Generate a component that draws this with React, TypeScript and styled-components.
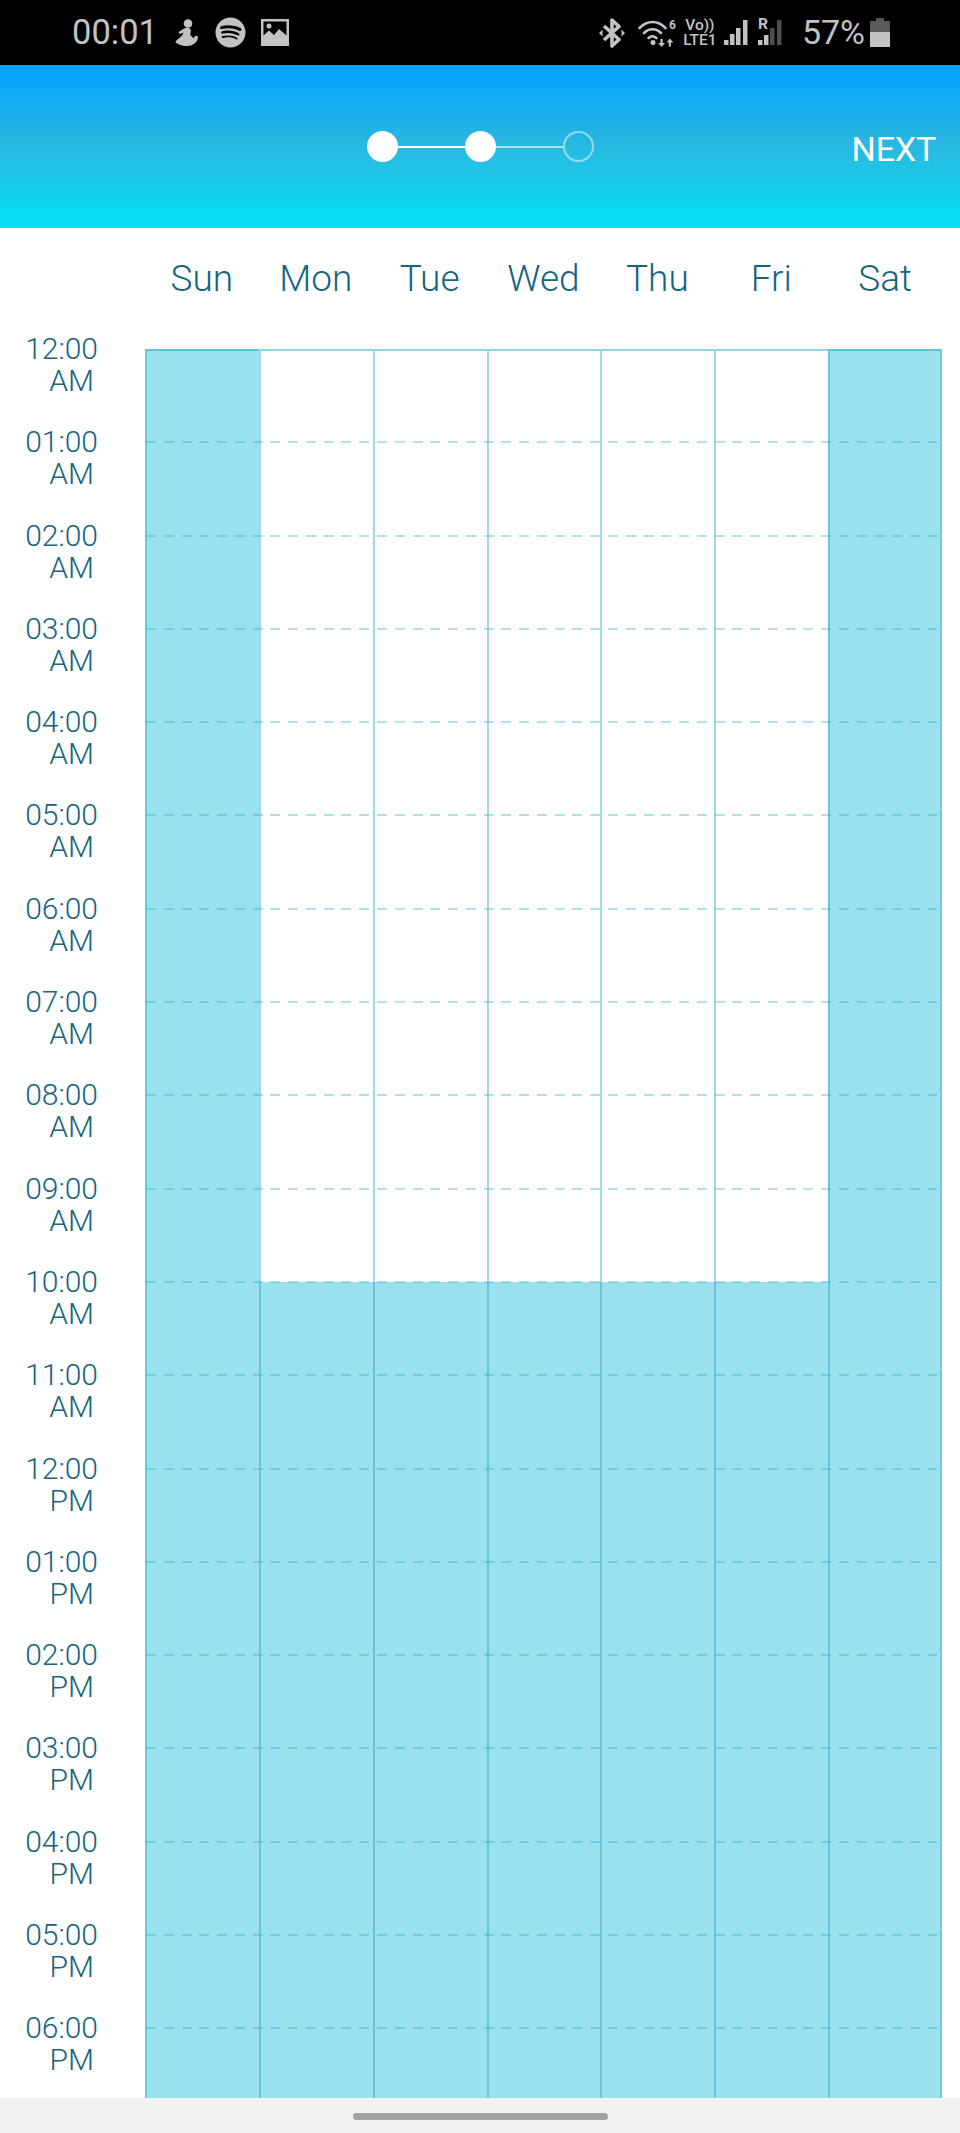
import React from "react";
import styled, { createGlobalStyle } from "styled-components";
import { FaSpotify } from "react-icons/fa";

const Global = createGlobalStyle`
  html, body { margin: 0; padding: 0; background: #fff; }
  body { font-family: Roboto, "Liberation Sans", sans-serif; }
  * { box-sizing: border-box; }
`;

const Screen = styled.div`
  width: 960px;
  height: 2133px;
  display: flex;
  flex-direction: column;
  overflow: hidden;
  background: #fff;
`;

const StatusBar = styled.div`
  height: 65px;
  flex: none;
  background: #000;
  color: #c2c2c2;
  display: flex;
  align-items: center;
  justify-content: space-between;
  padding: 0 70px 0 72px;
`;

const StatusGroup = styled.div`
  display: flex;
  align-items: center;
`;

const Clock = styled.span`
  font-size: 34.5px;
  font-weight: 400;
  line-height: 65px;
  width: 102px;
`;

const StatusIcon = styled.svg<{ $gap?: number }>`
  display: block;
  flex: none;
  margin-right: ${(p) => p.$gap ?? 0}px;
  fill: currentColor;
`;

const SpotifyWrap = styled.span`
  display: flex;
  font-size: 31px;
  margin-right: 15px;
`;

const WifiWrap = styled.span`
  position: relative;
  display: block;
  width: 38px;
  height: 28px;
  margin-right: 7px;
`;

const WifiBand = styled.span`
  position: absolute;
  right: 0;
  top: 0;
  font-size: 12px;
  font-weight: 700;
  line-height: 12px;
`;

const NetworkBadge = styled.span`
  width: 34px;
  margin: 0 7px 0 0;
  display: flex;
  flex-direction: column;
  align-items: center;
  font-size: 15.5px;
  font-weight: 500;
  line-height: 15px;
`;

const RoamWrap = styled.span`
  position: relative;
  display: block;
  width: 25px;
  height: 27px;
`;

const RoamMark = styled.span`
  position: absolute;
  left: 0;
  top: -2px;
  font-size: 15.5px;
  font-weight: 700;
  line-height: 15px;
`;

const Percent = styled.span`
  font-size: 34px;
  font-weight: 400;
  margin: 0 5px 0 19px;
  line-height: 65px;
`;

const Header = styled.header`
  height: 163px;
  flex: none;
  background: linear-gradient(180deg, #02a2fd 0%, #2ab8e0 50%, #03e2f6 100%);
  display: grid;
  grid-template-columns: 1fr auto 1fr;
  align-items: center;
  padding: 0 24px;
`;

const Stepper = styled.div`
  grid-column: 2;
  display: flex;
  align-items: center;
`;

const StepDot = styled.span<{ $done: boolean }>`
  width: 31px;
  height: 31px;
  border-radius: 50%;
  background: ${(p) => (p.$done ? "#fff" : "transparent")};
  border: 2px solid ${(p) => (p.$done ? "#fff" : "rgba(255,255,255,.5)")};
`;

const StepLine = styled.span<{ $done: boolean }>`
  width: 67px;
  height: 2px;
  background: ${(p) => (p.$done ? "#fff" : "rgba(255,255,255,.6)")};
`;

const NextButton = styled.span`
  grid-column: 3;
  justify-self: end;
  color: #fff;
  font-size: 34px;
  font-weight: 400;
  letter-spacing: -0.2px;
  padding-top: 4px;
`;

const DayRow = styled.div`
  height: 104px;
  flex: none;
  padding: 0 18px 0 145px;
  display: grid;
  grid-template-columns: repeat(7, 1fr);
  align-items: start;
`;

const DayName = styled.span`
  text-align: center;
  color: #16647f;
  font-size: 37px;
  font-weight: 300;
  line-height: 43px;
  padding-top: 29px;
`;

const Body = styled.div`
  flex: 1;
  min-height: 0;
  display: flex;
  overflow: hidden;
`;

const TimeColumn = styled.div`
  width: 145px;
  flex: none;
  padding-top: 1px;
`;

const TimeLabel = styled.div`
  height: 93.3px;
  padding-right: 47px;
  text-align: right;
  color: #16647f;
  font-size: 30px;
  font-weight: 300;
  line-height: 32px;
`;

const Meridiem = styled.span`
  display: block;
  padding-right: 4px;
`;

const GridColumn = styled.div`
  width: 797px;
  flex: none;
  padding-top: 17px;
`;

const HourRow = styled.div`
  position: relative;
  height: 93.3px;
  display: grid;
  grid-template-columns: repeat(7, 1fr);
  &:first-child > span { border-top: 2px solid rgba(40, 170, 200, 0.5); }
  &:not(:first-child)::after {
    content: "";
    position: absolute;
    left: 1px;
    right: 5px;
    top: -1px;
    height: 2px;
    background: repeating-linear-gradient(90deg, rgba(40,170,200,.36) 0, rgba(40,170,200,.36) 10px, transparent 10px, transparent 17.77px);
  }
`;

const HourCell = styled.span<{ $on: boolean }>`
  background: ${(p) => (p.$on ? "#9ae1ee" : "#fff")};
  border-left: 2px solid rgba(30, 160, 195, 0.42);
  &:first-child { border-left-color: rgba(40, 170, 200, 0.4); }
  &:last-child { border-right: 2px solid rgba(40, 170, 200, 0.4); }
`;

const BottomBar = styled.div`
  height: 35px;
  flex: none;
  background: #f2f2f2;
  display: flex;
  align-items: center;
  justify-content: center;
  padding-top: 1px;
`;

const HomePill = styled.span`
  width: 255px;
  height: 7px;
  border-radius: 4px;
  background: #a3a3a3;
`;

const DAYS = ["Sun", "Mon", "Tue", "Wed", "Thu", "Fri", "Sat"];
const HOURS = ["12:00", "01:00", "02:00", "03:00", "04:00", "05:00", "06:00", "07:00", "08:00", "09:00", "10:00", "11:00", "12:00", "01:00", "02:00", "03:00", "04:00", "05:00", "06:00"];

const isOn = (day: number, hour: number) => day === 0 || day === 6 || hour >= 10;

const PersonIcon = () => (
  <StatusIcon $gap={16} width="25" height="28" viewBox="0 0 25 28">
    <circle cx="14" cy="4.5" r="4.3" />
    <path d="M10 9.5c2.300-1 5.500-1 6.500.8.800 1.700.2 3.200-.3 4.700.7 2 2 3.500 3.600 4l1.500-2.300 2.500.5c.5 2.800-1 5.500-3 7-1.800 1.400-4.300 2.800-7.800 2.800-3.500 0-8-.8-11-3.300l-.5-1.500 6.500-5.500 1.600-3.200-3.600 1.500-1.700-1.800z" />
  </StatusIcon>
);

const GalleryIcon = () => (
  <StatusIcon width="28" height="27" viewBox="0 0 28 27">
    <path fillRule="evenodd" d="M0 0h28v27H0zM2.5 2.500v14l5.500-5 5 4.500 5-6 7.500 6.500V2.500z" />
    <circle cx="8" cy="7" r="2.5" />
  </StatusIcon>
);

const BluetoothIcon = () => (
  <StatusIcon $gap={13} width="26" height="30" viewBox="0 0 26 30">
    <path d="M5 8l15 13.500L13 28V2l7 6.500L5 22" fill="none" stroke="currentColor" strokeWidth="3.6" strokeLinejoin="round" />
    <path d="M0 15l3.500-3.500v7zM26 15l-3.500-3.500v7z" />
  </StatusIcon>
);

const WifiIcon = () => (
  <WifiWrap>
    <StatusIcon width="38" height="28" viewBox="0 0 38 28">
      <g fill="none" stroke="currentColor" strokeWidth="2.6" strokeLinecap="round">
        <path d="M1.500 9C9 1 20 1 27.500 9" />
        <path d="M6 14c5-5 12-5 17 0" />
        <path d="M10.500 19c3-2.500 5-2.500 8 0" />
      </g>
      <circle cx="15" cy="23.5" r="2.5" />
      <path d="M22.500 20h2.200v4H27l-3.400 4-3.400-4h2.300zM33 27.500h-2.200v-4h-2.300l3.400-4 3.400 4H33z" />
    </StatusIcon>
    <WifiBand>6</WifiBand>
  </WifiWrap>
);

const BARS = [
  { x: 0, y: 21 },
  { x: 6, y: 15 },
  { x: 12, y: 9 },
  { x: 19, y: 1 },
];

const SignalIcon = ({ gap, dim, roam }: { gap: number; dim: number; roam?: boolean }) => (
  <StatusIcon $gap={gap} width="25" height="27" viewBox="0 0 25 27">
    {BARS.map((b, i) => {
      const top = roam && i < 2 ? Math.max(b.y, 16) : b.y;
      return (
        <rect key={b.x} x={b.x} y={top} width="4.5" height={26 - top} opacity={i >= dim ? 0.4 : 1} />
      );
    })}
  </StatusIcon>
);

const BatteryIcon = () => (
  <StatusIcon width="20" height="29" viewBox="0 0 20 29">
    <path fill="#595959" d="M6 0h8v3h6v11H0V3h6z" />
    <rect y="14" width="20" height="15" />
  </StatusIcon>
);

export default function App() {
  return (
    <Screen>
      <Global />
      <StatusBar>
        <StatusGroup>
          <Clock>00:01</Clock>
          <PersonIcon />
          <SpotifyWrap><FaSpotify /></SpotifyWrap>
          <GalleryIcon />
        </StatusGroup>
        <StatusGroup>
          <BluetoothIcon />
          <WifiIcon />
          <NetworkBadge><span>Vo))</span><span>LTE1</span></NetworkBadge>
          <SignalIcon gap={9} dim={4} />
          <RoamWrap>
            <SignalIcon gap={0} dim={2} roam />
            <RoamMark>R</RoamMark>
          </RoamWrap>
          <Percent>57%</Percent>
          <BatteryIcon />
        </StatusGroup>
      </StatusBar>
      <Header>
        <Stepper>
          <StepDot $done />
          <StepLine $done />
          <StepDot $done />
          <StepLine $done={false} />
          <StepDot $done={false} />
        </Stepper>
        <NextButton>NEXT</NextButton>
      </Header>
      <DayRow>
        {DAYS.map((d) => <DayName key={d}>{d}</DayName>)}
      </DayRow>
      <Body>
        <TimeColumn>
          {HOURS.map((h, i) => (
            <TimeLabel key={i}>
              {h}
              <Meridiem>{i < 12 ? "AM" : "PM"}</Meridiem>
            </TimeLabel>
          ))}
        </TimeColumn>
        <GridColumn>
          {HOURS.map((_, hour) => (
            <HourRow key={hour}>
              {DAYS.map((d, day) => <HourCell key={d} $on={isOn(day, hour)} />)}
            </HourRow>
          ))}
        </GridColumn>
      </Body>
      <BottomBar><HomePill /></BottomBar>
    </Screen>
  );
}
